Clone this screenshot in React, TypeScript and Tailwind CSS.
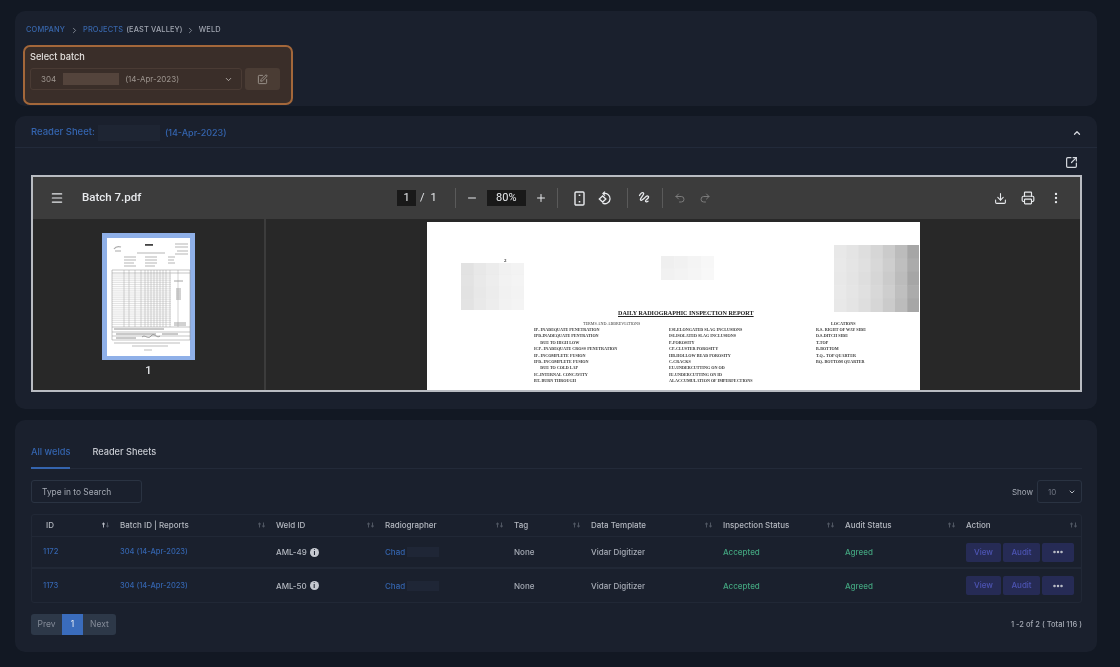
import React from "react";
import {
  ChevronDown,
  ChevronRight,
  ChevronUp,
  Download,
  Ellipsis,
  EllipsisVertical,
  Menu,
  Minus,
  Plus,
  Printer,
  Redo2,
  SquareArrowOutUpRight,
  SquarePen,
  Undo2,
} from "lucide-react";

const gridCols =
  "grid grid-cols-[81px_156px_109px_129px_77px_132px_122px_121px_1fr] items-center";

const headers = [
  "ID",
  "Batch ID | Reports",
  "Weld ID",
  "Radiographer",
  "Tag",
  "Data Template",
  "Inspection Status",
  "Audit Status",
  "Action",
];

const rows = [
  { id: "1172", weld: "AML-49" },
  { id: "1173", weld: "AML-50" },
];

const col1 = [
  "IP- INADEQUATE PENETRATION",
  "IPD-INADEQUATE PENTRATION",
  "\u00a0\u00a0\u00a0\u00a0\u00a0\u00a0DUE TO HIGH LOW",
  "ICP- INADEQUATE CROSS PENETRATION",
  "IF- INCOMPLETE FUSION",
  "IFD- INCOMPLETE FUSION",
  "\u00a0\u00a0\u00a0\u00a0\u00a0\u00a0DUE TO COLD LAP",
  "IC-INTERNAL CONCAVITY",
  "BT- BURN THROUGH",
];

const col2 = [
  "ESI-ELONGATED SLAG INCLUSIONS",
  "ISI-ISOLATED SLAG INCLUSIONS",
  "P-POROSITY",
  "CP-CLUSTER POROSITY",
  "HB-HOLLOW BEAD POROSITY",
  "C-CRACKS",
  "EU-UNDERCUTTING ON OD",
  "IU-UNDERCUTTING ON ID",
  "AI-ACCUMULATION OF IMPERFECTIONS",
];

const col3 = [
  "R.S- RIGHT OF WAY SIDE",
  "D.S-DITCH SIDE",
  "T-TOP",
  "B-BOTTOM",
  "T.Q.- TOP QUARTER",
  "BQ- BOTTOM QUARTER",
];

function SortIcon({ active }: { active?: boolean }) {
  return (
    <svg width="9" height="6" viewBox="0 0 9 6" fill="none" strokeWidth="0.9">
      <path d="M2.5 5.5V1M1 2.4 2.5 1 4 2.4" stroke={active ? "#c8ccd4" : "#565c69"} />
      <path d="M6.5 .5V5M5 3.6 6.5 5 8 3.6" stroke="#565c69" />
    </svg>
  );
}

function Mosaic({
  rowsCount,
  cellW,
  cellH,
  shades,
}: {
  rowsCount: number;
  cellW: number;
  cellH: number;
  shades: string[];
}) {
  const cells = [];
  for (let r = 0; r < rowsCount; r++) {
    for (let c = 0; c < shades.length; c++) {
      cells.push(
        <rect
          key={`${r}-${c}`}
          x={c * cellW}
          y={r * cellH}
          width={cellW + 0.5}
          height={cellH + 0.5}
          fill={shades[c]}
          opacity={1 - (r % 2) * 0.05}
        />,
      );
    }
  }
  return (
    <svg width={shades.length * cellW} height={rowsCount * cellH}>
      {cells}
    </svg>
  );
}

function Thumbnail() {
  const hLines = [];
  for (let y = 42; y < 93; y += 1.9) hLines.push(y);
  const vLines = [22, 27, 33, 39, 43, 46, 49, 52, 55, 58, 61, 64, 68, 76];
  return (
    <svg width="93" height="127" viewBox="0 0 93 127" className="block">
      <rect width="93" height="127" fill="#8fb0e8" />
      <rect x="5" y="5" width="83" height="118" fill="#fff" />
      <path d="M12 16c2-3 4-3 7-2M13 18h6" stroke="#aaa" strokeWidth="1.2" fill="none" />
      <rect x="43" y="11" width="8" height="1.8" fill="#444" />
      <path
        d="M73 11h13M73 14h13M75 18h11M73 21h13M35 20h28M22 24h12M22 27h12M22 30h10M22 33h12M43 24h12M43 27h12M43 30h12M43 33h10M66 24h7M66 27h6M66 30h7"
        stroke="#a2a2a2"
        strokeWidth="0.8"
      />
      {hLines.map((y) => (
        <path key={y} d={`M10 ${y}H69`} stroke="#c6c6c6" strokeWidth="0.5" />
      ))}
      {vLines.map((x) => (
        <path key={x} d={`M${x} 37V94`} stroke="#a4a4a4" strokeWidth="0.5" />
      ))}
      <path d="M10 37H88M10 40H88M10 94H88M10 99H88M10 103H88M10 107H88" stroke="#8a8a8a" strokeWidth="0.5" />
      <path d="M10 37V107M88 37V107" stroke="#8a8a8a" strokeWidth="0.5" />
      <path d="M72 48h9M74 56h5M74 58h5M74 60h5M74 62h5M74 64h5M74 66h5M72 90h12M72 92h12" stroke="#8d8d8d" strokeWidth="0.8" />
      <path d="M12 96h50M14 101h40M60 101h16M14 105h20" stroke="#777" strokeWidth="0.8" />
      <path d="M12 110h66M30 113h36M42 117h8" stroke="#a2a2a2" strokeWidth="0.7" />
      <path d="M40 104c3-3 6 3 9-1s6 3 9 0" stroke="#666" strokeWidth="0.6" fill="none" />
    </svg>
  );
}

function DocPage() {
  const line = "whitespace-nowrap h-[6.4px] leading-[6.4px]";
  return (
    <div className="relative ml-[161px] mt-[3px] w-[493px] h-[170px] bg-white overflow-hidden font-['Liberation_Serif',serif] font-bold text-[4.15px] text-[#3a3a3a]">
      <div className="absolute left-[34px] top-[41px]">
        <Mosaic rowsCount={4} cellW={12.6} cellH={11.8} shades={["#e2e2e2", "#e8e8e8", "#ececec", "#f1f1f1", "#f3f3f3"]} />
      </div>
      <div className="absolute left-[234px] top-[34px] opacity-70">
        <Mosaic rowsCount={2} cellW={13.3} cellH={12} shades={["#e9e9e9", "#ececec", "#f0f0f0", "#f4f4f4"]} />
      </div>
      <div className="absolute left-[407px] top-[23px]">
        <Mosaic
          rowsCount={5}
          cellW={12.2}
          cellH={13.4}
          shades={["#e8e8e8", "#e4e4e4", "#dedede", "#d6d6d6", "#cbcbcb", "#bcbcbc", "#a6a6a6"]}
        />
      </div>
      <div className="absolute left-[77px] top-[36px] text-[5px] leading-none">2</div>

      <div className="pt-[87px] pl-[191px] text-[6.1px] leading-[8px] underline text-[#222] whitespace-nowrap">
        DAILY RADIOGRAPHIC INSPECTION REPORT
      </div>
      <div className="flex mt-[3px] pl-[107px]">
        <div className="w-[135px]">
          <div className="pl-[49px] h-[7px] leading-[7px] font-normal whitespace-nowrap">TERMS AND ABBREVIATIONS</div>
          {col1.map((t) => (
            <div key={t} className={line}>{t}</div>
          ))}
        </div>
        <div className="w-[147px]">
          <div className="h-[7px]" />
          {col2.map((t) => (
            <div key={t} className={line}>{t}</div>
          ))}
        </div>
        <div>
          <div className="pl-[15px] h-[7px] leading-[7px] whitespace-nowrap">LOCATIONS</div>
          {col3.map((t) => (
            <div key={t} className={line}>{t}</div>
          ))}
        </div>
      </div>
    </div>
  );
}

function FitIcon() {
  return (
    <svg width="13" height="15" viewBox="0 0 13 15" fill="none" stroke="#e8eaed" strokeWidth="1.4">
      <rect x="2" y="1" width="9" height="13" rx="1" />
      <path d="M6.5 3.5v1.5M6.5 10v1.5" strokeWidth="1.6" />
    </svg>
  );
}

function RotateIcon() {
  return (
    <svg width="15" height="15" viewBox="0 0 15 15" fill="none" stroke="#e8eaed" strokeWidth="1.3">
      <path d="M5.2 2.6a5.2 5.2 0 1 1 -.6 9.6" />
      <path d="M7 .6 5 2.6l2 2" />
      <path d="M4.6 5 1.3 8l3.3 3 3.3-3z" />
    </svg>
  );
}

function DrawIcon() {
  return (
    <svg width="14" height="14" viewBox="0 0 14 14" fill="none" stroke="#e8eaed" strokeWidth="1.3" strokeLinecap="round">
      <path d="M1.5 4.5c1-2.5 3-3.5 4-2.5 1.5 1.5-4 5-3 7 .8 1.4 4-2 5.5-3.5 1.2-1 3-.6 2.5 1-.5 1.6-3 2-3 3.5 0 1 1.5 1 2.500.2" />
    </svg>
  );
}

function Divider() {
  return <div className="w-px h-[20px] bg-[#5a5a5a]" />;
}

function PdfViewer() {
  return (
    <div className="h-[217px] border-2 border-[#b9bcc2] bg-[#282828] flex flex-col overflow-hidden font-['Roboto',sans-serif]">
      <div className="h-[42px] shrink-0 bg-[#3c3c3c] flex items-center text-[#e8eaed] relative">
        <Menu size={14} className="ml-[17px]" />
        <span className="ml-[18px] text-[11.5px] font-medium">Batch 7.pdf</span>
        <div className="absolute left-[364px] top-0 h-full flex items-center">
          <span className="w-[19px] h-[16px] bg-[#191919] text-[11px] text-center leading-[16px]">1</span>
          <span className="ml-[4px] text-[11px]">/</span>
          <span className="ml-[6px] text-[11px]">1</span>
          <div className="ml-[18px]"><Divider /></div>
          <Minus size={12} className="ml-[10px]" />
          <span className="ml-[9px] w-[39px] h-[16px] bg-[#191919] text-[11px] text-center leading-[16px]">80%</span>
          <Plus size={12} className="ml-[9px]" />
          <div className="ml-[10px]"><Divider /></div>
          <div className="ml-[15px]"><FitIcon /></div>
          <div className="ml-[12px]"><RotateIcon /></div>
          <div className="ml-[14px]"><Divider /></div>
          <div className="ml-[10px]"><DrawIcon /></div>
          <div className="ml-[10px]"><Divider /></div>
          <Undo2 size={12} className="ml-[11px] text-[#7c7c7c]" />
          <Redo2 size={12} className="ml-[13px] text-[#7c7c7c]" />
        </div>
        <div className="ml-auto flex items-center gap-[14px] mr-[17px]">
          <Download size={13} />
          <Printer size={14} />
          <EllipsisVertical size={14} />
        </div>
      </div>
      <div className="flex-1 flex min-h-0">
        <div className="w-[233px] shrink-0 border-r-2 border-[#3c3c3c] flex flex-col items-center pt-[14px]">
          <Thumbnail />
          <span className="mt-[3px] text-[11px] text-[#e8eaed] font-medium">1</span>
        </div>
        <div className="flex-1 min-w-0">
          <DocPage />
        </div>
      </div>
    </div>
  );
}

export default function App() {
  return (
    <div className="h-[667px] w-[1120px] overflow-hidden bg-[#121823] pt-[11px] pl-[15px] pr-[23px] flex flex-col gap-[10px] font-['Inter',sans-serif] text-[#c6c9d0] blur-[0.4px]">
      {/* breadcrumb + batch select */}
      <div className="h-[95px] rounded-[10px] bg-[#1a202d] pl-[8px] shrink-0">
        <div className="flex items-center h-[37px] pl-[3px] pt-[1px] text-[7.4px] tracking-[0.15px] font-medium uppercase">
          <span className="text-[#3866ab]">Company</span>
          <ChevronRight size={9} className="mx-[4.5px] text-[#9aa0ab]" />
          <span className="text-[#3866ab]">Projects</span>
          <span className="ml-[3px] text-[#a0a5b0]">(East Valley)</span>
          <ChevronRight size={9} className="mx-[3.5px] text-[#9aa0ab]" />
          <span className="text-[#a0a5b0]">Weld</span>
        </div>
        <div className="w-[270px] h-[60px] -mt-[3px] rounded-[7px] border-2 border-[#a3673a] bg-[#3a2e29] px-[5px] pt-[3px]">
          <div className="text-[9.2px] font-medium text-[#e4e1de] leading-[14px]">Select batch</div>
          <div className="flex gap-[3px] mt-[4px]">
            <div className="w-[212px] h-[22px] rounded-[3px] border border-[#4a3b34] flex items-center pl-[10px] pr-[8px] text-[8px] text-[#9d958f]">
              <span>304</span>
              <span className="ml-[7px] w-[56px] h-[12px] bg-[#54443c]" />
              <span className="ml-[6px]">(14-Apr-2023)</span>
              <ChevronDown size={9} className="ml-auto text-[#cfc9c5]" />
            </div>
            <div className="w-[35px] h-[22px] rounded-[3px] bg-[#4a3c34] flex items-center justify-center">
              <SquarePen size={11} className="text-[#a09890]" />
            </div>
          </div>
        </div>
      </div>

      {/* reader sheet */}
      <div className="h-[293px] rounded-[10px] bg-[#1a202d] shrink-0">
        <div className="h-[32px] pt-[2px] border-b border-[#222a3a] flex items-center pl-[16px] pr-[15px] text-[#3464ae] font-medium">
          <span className="text-[9.5px]">Reader Sheet:</span>
          <span className="ml-[3px] w-[62px] h-[16px] bg-[#1e2533]" />
          <span className="ml-[5px] text-[9px]">(14-Apr-2023)</span>
          <ChevronUp size={10} strokeWidth={3} className="ml-auto text-[#d5d8de]" />
        </div>
        <div className="pl-[16px] pr-[15px]">
          <div className="h-[27px] pt-[2px] flex items-center justify-end pr-[4px]">
            <SquareArrowOutUpRight size={13} strokeWidth={2.2} className="text-[#d5d8de]" />
          </div>
          <PdfViewer />
        </div>
      </div>

      {/* welds table */}
      <div className="h-[232px] mt-[1px] rounded-[10px] bg-[#1a202d] pl-[16px] pr-[15px] shrink-0 text-[8px]">
        <div className="h-[49px] border-b border-[#232a39] flex items-start gap-[22px] pt-[25px] text-[9.2px] font-medium">
          <div className="h-[24px] border-b-2 border-[#3464ae] text-[#3464ae] leading-[14px] -mb-px">All welds</div>
          <div className="text-[#c6c9d0] leading-[14px]">Reader Sheets</div>
        </div>

        <div className="flex items-center justify-between mt-[11px]">
          <div className="w-[111px] h-[23px] pt-[2px] rounded-[3px] border border-[#2a3342] flex items-center pl-[10px] text-[8.4px] text-[#a6abb5]">
            Type in to Search
          </div>
          <div className="flex items-center gap-[4px]">
            <span className="text-[#a6abb5]">Show</span>
            <div className="w-[45px] h-[23px] rounded-[3px] border border-[#2a3342] flex items-center pl-[10px] pr-[5px] text-[#6f7582]">
              10
              <ChevronDown size={8} strokeWidth={3} className="ml-auto text-[#b4b8c0]" />
            </div>
          </div>
        </div>

        <div className="mt-[11px] border border-[#212836] rounded-[3px] font-medium">
          <div className={`${gridCols} h-[22px] pb-[2px] border-b border-[#212836] text-[#b4b8c0]`}>
            {headers.map((h, i) => (
              <div key={h} className={`flex items-center pr-[3px] ${i === 0 ? "pl-[14px]" : "pl-[7px]"}`}>
                <span>{h}</span>
                <span className="ml-auto">
                  <SortIcon active={i === 0} />
                </span>
              </div>
            ))}
          </div>
          {rows.map((r, i) => (
            <div
              key={r.id}
              className={`${gridCols} text-[#a6abb5] ${i === 0 ? "h-[32px] border-b-2 border-[#212836]" : "h-[33px]"}`}
            >
              <div className="pl-[11px] text-[7.6px] text-[#3464ae]">{r.id}</div>
              <div className="pl-[7px] text-[7.5px] text-[#3464ae]">304 (14-Apr-2023)</div>
              <div className="pl-[7px] flex items-center gap-[3px] text-[#b4b8c0]">
                {r.weld}
                <span className="w-[9px] h-[9px] rounded-full bg-[#c6c9d0] text-[#1a202d] text-[7px] leading-[9px] text-center font-bold">
                  i
                </span>
              </div>
              <div className="pl-[7px] flex items-center text-[#3464ae]">
                Chad
                <span className="ml-[2px] w-[32px] h-[10px] bg-[#1f2636]" />
              </div>
              <div className="pl-[7px]">None</div>
              <div className="pl-[7px]">Vidar Digitizer</div>
              <div className="pl-[7px] text-[#43a47f]">Accepted</div>
              <div className="pl-[7px] text-[#43a47f]">Agreed</div>
              <div className="pl-[7px] flex gap-[2px] text-[#4d54b3]">
                <span className="w-[35px] h-[19px] rounded-[2px] bg-[#262b55] text-center leading-[19px]">View</span>
                <span className="w-[37px] h-[19px] rounded-[2px] bg-[#262b55] text-center leading-[19px]">Audit</span>
                <span className="w-[32px] h-[19px] rounded-[2px] bg-[#262b55] flex items-center justify-center text-[#c6c9d0]">
                  <Ellipsis size={12} strokeWidth={3} />
                </span>
              </div>
            </div>
          ))}
        </div>

        <div className="flex items-center justify-between mt-[11px]">
          <div className="flex h-[21px] rounded-[3px] overflow-hidden bg-[#2d3848] text-[#848b98] leading-[21px] text-[8.5px]">
            <span className="w-[31px] text-center">Prev</span>
            <span className="w-[21px] text-center bg-[#3a6cbc] text-[#e6ebf4]">1</span>
            <span className="w-[33px] text-center">Next</span>
          </div>
          <span className="text-[7.5px] text-[#a6abb5] font-medium">1 -2 of 2 ( Total 116 )</span>
        </div>
      </div>
    </div>
  );
}
